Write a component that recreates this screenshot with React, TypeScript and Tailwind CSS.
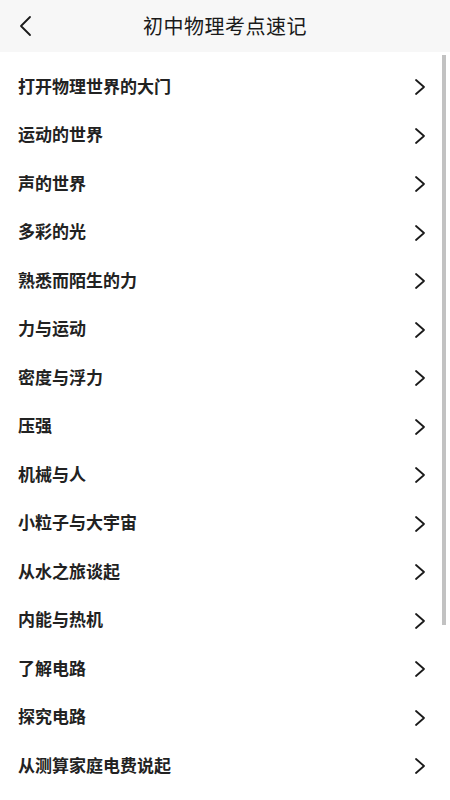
import React from "react";

const chapters = [
    "打开物理世界的大门",
    "运动的世界",
    "声的世界",
    "多彩的光",
    "熟悉而陌生的力",
    "力与运动",
    "密度与浮力",
    "压强",
    "机械与人",
    "小粒子与大宇宙",
    "从水之旅谈起",
    "内能与热机",
    "了解电路",
    "探究电路",
    "从测算家庭电费说起",
];

const Chevron: React.FC = () => (
    <svg width="12" height="18" viewBox="0 0 12 18" fill="none" className="mt-[4px]">
        <path d="M2 2 L10 9 L2 16" stroke="#1a1a1a" strokeWidth="1.8" strokeLinecap="round" strokeLinejoin="round" />
    </svg>
);

const App: React.FC = () => {
    return (
        <div
            className="relative w-[450px] h-[800px] overflow-hidden bg-white"
            style={{ fontFamily: '"Noto Sans CJK SC", "Noto Sans", sans-serif' }}
        >
            {/* Header */}
            <div className="relative flex items-center justify-center h-[52px] bg-[#f7f7f7]">
                <button className="absolute left-[14px] top-[14px] w-[24px] h-[24px] flex items-center justify-center">
                    <svg width="16" height="22" viewBox="0 0 16 22" fill="none">
                        <path d="M12 2 L3 11 L12 20" stroke="#1a1a1a" strokeWidth="1.8" strokeLinecap="round" strokeLinejoin="round" />
                    </svg>
                </button>
                <h1 className="text-[20px] text-[#1a1a1a] tracking-[0.5px]">初中物理考点速记</h1>
            </div>

            {/* List */}
            <div className="pt-[9px]">
                {chapters.map((c) => (
                    <div key={c} className="flex items-center justify-between h-[48.5px] pl-[18px] pr-[24px]">
                        <span className="text-[17px] font-bold text-[#222]">{c}</span>
                        <Chevron />
                    </div>
                ))}
            </div>

            {/* Scrollbar */}
            <div className="absolute right-[4px] top-[55px] w-[4px] h-[570px] bg-[#c2c2c2]" />
        </div>
    );
};

export default App;
